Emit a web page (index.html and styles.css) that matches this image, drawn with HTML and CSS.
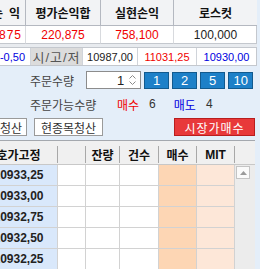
FILE: index.html
```html
<!DOCTYPE html>
<html lang="ko">
<head>
<meta charset="utf-8">
<link rel="stylesheet" href="styles.css">
</head>
<body>
<div class="summary">
  <div class="sh cut"><span>평가손익</span></div>
  <div class="sh">평가손익합</div>
  <div class="sh">실현손익</div>
  <div class="sh">로스컷</div>
  <div class="sd cut red"><span>220,875</span></div>
  <div class="sd red">220,875</div>
  <div class="sd red">758,100</div>
  <div class="sd">100,000</div>
</div>
<div class="band"></div>
<div class="hlrow">
  <div class="hc blue right">-0,50</div>
  <div class="hc label">시/고/저</div>
  <div class="hc">10987,00</div>
  <div class="hc red">11031,25</div>
  <div class="hc blue">10930,00</div>
</div>
<div class="panel">
  <div class="prow">
    <span class="plabel">주문수량</span>
    <div class="spin"><span class="val">1</span><svg class="arrows" width="7" height="12" viewBox="0 0 7 12"><path d="M0.5 4.5 L3.5 1.5 L6.5 4.5" fill="none" stroke="#8a8a8a"/><path d="M0.5 7.5 L3.5 10.5 L6.5 7.5" fill="none" stroke="#8a8a8a"/></svg></div>
    <div class="qbtns">
      <button class="qb">1</button>
      <button class="qb">2</button>
      <button class="qb">5</button>
      <button class="qb">10</button>
    </div>
  </div>
  <div class="prow avail">
    <span class="plabel">주문가능수량</span>
    <span class="red k buy">매수</span><span class="num">6</span>
    <span class="blue k sell">매도</span><span class="num">4</span>
  </div>
  <div class="prow acts">
    <button class="wb first">전체청산</button>
    <button class="wb second">현종목청산</button>
    <button class="rb">시장가매수</button>
  </div>
</div>
<div class="ghead">
  <div class="gh price">호가고정</div>
  <div class="gh"></div>
  <div class="gh">잔량</div>
  <div class="gh">건수</div>
  <div class="gh">매수</div>
  <div class="gh">MIT</div>
  <div class="gh sbh"></div>
</div>
<div class="grid">
  <div class="gd price">10933,25</div><div class="gd"></div><div class="gd"></div><div class="gd"></div><div class="gd buycol"></div><div class="gd mitcol"></div>
  <div class="sb"><div class="sbup"><svg width="7" height="4" viewBox="0 0 7 4"><path d="M0 4 L3.5 0 L7 4 Z" fill="#9a9a9a"/></svg></div></div>
  <div class="gd price">10933,00</div><div class="gd"></div><div class="gd"></div><div class="gd"></div><div class="gd buycol"></div><div class="gd mitcol"></div>
  <div class="gd price">10932,75</div><div class="gd"></div><div class="gd"></div><div class="gd"></div><div class="gd buycol"></div><div class="gd mitcol"></div>
  <div class="gd price">10932,50</div><div class="gd"></div><div class="gd"></div><div class="gd"></div><div class="gd buycol"></div><div class="gd mitcol"></div>
  <div class="gd price">10932,25</div><div class="gd"></div><div class="gd"></div><div class="gd"></div><div class="gd buycol"></div><div class="gd mitcol"></div>
</div>
</body>
</html>
```
FILE: styles.css
```css
* { box-sizing: border-box; margin: 0; padding: 0; }
html, body { width: 260px; height: 269px; overflow: hidden; }
body {
  background: #e4eef9;
  font-family: "Liberation Sans", "Noto Sans CJK KR", sans-serif;
  font-size: 12px;
  color: #222;
}
.red { color: #f00000; }
.blue { color: #0000e0; }

.summary {
  display: grid;
  grid-template-columns: 25px 75px 73px 84px;
  width: 257px;
  background: #fff;
  border-right: 1px solid #c4c8ce;
}
.sh {
  height: 26px;
  display: flex; align-items: center; justify-content: center;
  font-weight: bold;
  font-size: 12px;
  color: #111;
  background: #f2f3f5;
  border-bottom: 1px solid #b4b8c0;
  border-left: 1px solid #b4b8c0;
}
.sd {
  height: 18px;
  display: flex; align-items: center; justify-content: center;
  border-left: 1px solid #d8dade;
  border-bottom: 1px solid #c4c8ce;
}
.cut { border-left: none; overflow: hidden; justify-content: flex-end; white-space: nowrap; }
.sh.cut span { letter-spacing: 6px; margin-right: -1px; }
.sd.cut span { letter-spacing: 1px; margin-right: 3px; }
.band { height: 4px; background: #e8ebef; border-bottom: 1px solid #c4c8ce; width: 257px; }

.hlrow {
  display: grid;
  grid-template-columns: 30px 52px 55px 59px 60px;
  width: 257px;
  height: 18px;
  background: #fff;
  border-bottom: 1px solid #c4c8ce;
  border-right: 1px solid #c4c8ce;
  font-size: 11px;
}
.hc { display: flex; align-items: center; justify-content: center; border-left: 1px solid #d0d4da; white-space: nowrap; overflow: hidden; }
.hc.right { justify-content: flex-end; padding-right: 5px; border-left: none; }
.hc.label { background: #dcdcdc; color: #555; font-size: 13px; letter-spacing: 1px; }

.panel { padding: 5px 0 0 0; height: 74px; }
.prow { display: flex; align-items: center; height: 18px; }
.plabel { margin-left: 30px; color: #444; }
.spin {
  margin-left: 12px;
  width: 55px; height: 18px;
  background: #fff;
  border: 1px solid #8c8c8c;
  display: flex; align-items: center; justify-content: flex-end;
  padding-right: 4px;
}
.spin .val { margin-right: 5px; font-size: 13px; }
.qbtns { display: flex; gap: 3px; margin-left: 3px; }
.qb {
  width: 25px; height: 17px;
  background: #1d80c8;
  border: 1px solid #125a8e;
  color: #fff;
  font-family: inherit; font-size: 13px;
}
.avail { margin-top: 6px; }
.avail .plabel { width: 87px; }
.k { font-size: 12px; }
.num { color: #333; margin-left: 10px; }
.sell { margin-left: 18px; }
.acts { margin-top: 5px; }
.wb {
  height: 18px;
  background: #fff;
  border: 1px solid #9a9a9a;
  color: #333;
  font-family: inherit; font-size: 12px;
  white-space: nowrap;
  overflow: hidden;
}
.wb.first { margin-left: -33px; width: 60px; text-align: right; padding-right: 4px; }
.wb.second { margin-left: 7px; width: 69px; padding: 0; }
.rb {
  margin-left: 71px;
  width: 81px; height: 18px;
  background: #e8393a;
  border: 1px solid #b81e1e;
  color: #fff;
  font-family: inherit; font-size: 12px;
  letter-spacing: 1px;
}

.ghead, .grid {
  display: grid;
  grid-template-columns: 78px 28px 34px 39px 38px 38px 20px;
  margin-left: -20px;
  width: 275px;
}
.ghead {
  border-top: 1px solid #a4a8ae;
  background: #f0f0f0;
  padding: 5px 0 3px 0;
  height: 25px;
  border-bottom: 1px solid #c8c8c8;
}
.grid { background: #fff; }
.gh {
  display: flex; align-items: center; justify-content: center;
  font-weight: bold;
  border-right: 1px solid #a8a8a8;
  color: #111;
}
.gh.sbh { border-right: none; }
.gd {
  height: 21px;
  border-right: 1px solid #d2d2d2;
  border-bottom: 1px solid #d2d2d2;
}
.gd.price {
  background: #d9e8fb;
  font-weight: bold;
  display: flex; align-items: center; justify-content: center;
  color: #222;
}
.buycol { background: #fdd6b4; }
.mitcol { background: #fde7d8; }
.sb {
  grid-column: 7; grid-row: 1 / span 5;
  background: #ececec;
  padding: 1px 0 0 1px;
}
.sbup {
  width: 14px; height: 13px;
  background: #fafafa;
  border: 1px solid #c4c4c4;
  display: flex; align-items: center; justify-content: center;
}
```
